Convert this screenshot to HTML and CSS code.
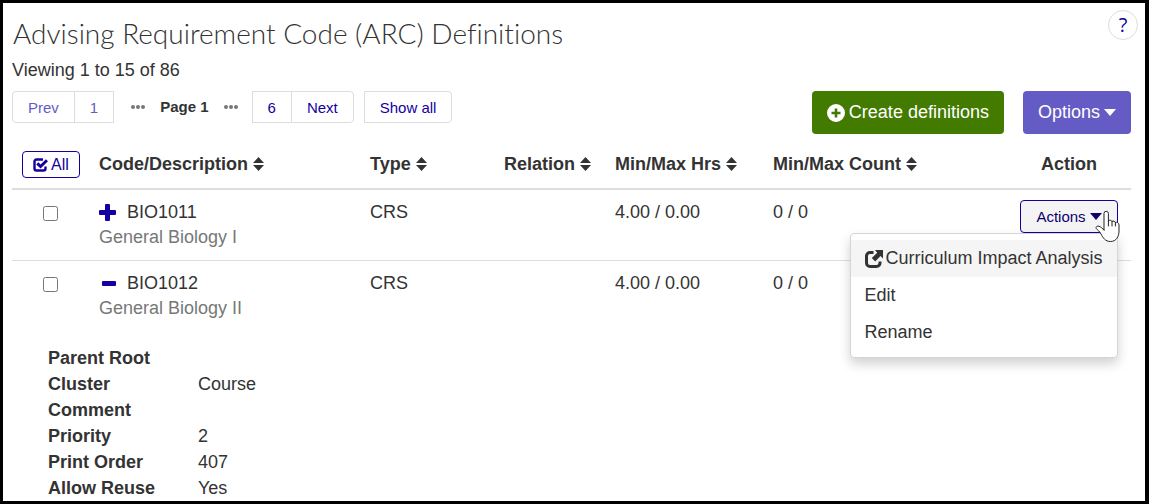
FILE: index.html
```
<!DOCTYPE html>
<html lang="en">
<head>
    <meta charset="UTF-8">
    <meta name="viewport" content="width=device-width, initial-scale=1.0">
    <title>Advising Requirement Code (ARC) Definitions</title>
    <link rel="stylesheet" href="styles.css">
</head>
<body>
    <!-- shared icons -->
    <svg class="sprite" aria-hidden="true">
        <symbol id="sort" viewBox="0 0 11 14">
            <path d="M5.5 0 11 6H0zM0 8h11l-5.5 6z"/>
        </symbol>
        <symbol id="caret" viewBox="0 0 12 7">
            <path d="M0 0h12L6 7z"/>
        </symbol>
        <symbol id="dots" viewBox="0 0 14 4">
            <circle cx="2" cy="2" r="2"/><circle cx="7" cy="2" r="2"/><circle cx="12" cy="2" r="2"/>
        </symbol>
    </svg>

    <div class="page">
        <header class="page-header">
            <h1>Advising Requirement Code (ARC) Definitions</h1>
            <button type="button" class="help" aria-label="Help">?</button>
        </header>

        <main class="content">
            <p class="viewing">Viewing 1 to 15 of 86</p>

            <div class="toolbar">
                <nav class="pagination" aria-label="Pages">
                    <div class="group">
                        <button type="button" disabled>Prev</button>
                        <button type="button" disabled>1</button>
                    </div>
                    <div class="current">
                        <svg width="14" height="4"><use href="#dots"/></svg>
                        <strong>Page 1</strong>
                        <svg width="14" height="4"><use href="#dots"/></svg>
                    </div>
                    <div class="group">
                        <button type="button">6</button>
                        <button type="button">Next</button>
                    </div>
                    <div class="group show-all">
                        <button type="button">Show all</button>
                    </div>
                </nav>
                <div class="buttons">
                    <button type="button" class="btn btn-create">
                        <svg width="18" height="18" viewBox="0 0 18 18"><path fill-rule="evenodd" d="M9 0a9 9 0 1 1 0 18A9 9 0 0 1 9 0zM7.7 4.5v3.2H4.5v2.6h3.2v3.2h2.6v-3.2h3.2V7.7h-3.2V4.5z"/></svg>
                        Create definitions
                    </button>
                    <button type="button" class="btn btn-options">
                        Options
                        <svg width="12" height="7"><use href="#caret"/></svg>
                    </button>
                </div>
            </div>

            <table class="definitions">
                <colgroup>
                    <col class="col-check">
                    <col class="col-code">
                    <col class="col-type">
                    <col class="col-relation">
                    <col class="col-hours">
                    <col class="col-count">
                    <col class="col-action">
                </colgroup>
                <thead>
                    <tr>
                        <th class="check">
                            <button type="button" class="select-all">
                                <svg width="15" height="14" viewBox="0 0 15 14"><path fill="none" stroke="currentColor" stroke-width="2.4" d="M10 1.5H3.5a2 2 0 0 0-2 2v7a2 2 0 0 0 2 2h7a2 2 0 0 0 2-2V8.5"/><path fill="none" stroke="currentColor" stroke-width="3" d="M4.3 5.3 7.6 8.5 14 2.2"/></svg>
                                All
                            </button>
                        </th>
                        <th>Code/Description <svg class="sort" width="11" height="14"><use href="#sort"/></svg></th>
                        <th>Type <svg class="sort" width="11" height="14"><use href="#sort"/></svg></th>
                        <th>Relation <svg class="sort" width="11" height="14"><use href="#sort"/></svg></th>
                        <th>Min/Max Hrs <svg class="sort" width="11" height="14"><use href="#sort"/></svg></th>
                        <th>Min/Max Count <svg class="sort" width="11" height="14"><use href="#sort"/></svg></th>
                        <th class="action">Action</th>
                    </tr>
                </thead>
                <tbody>
                    <tr>
                        <td class="check"><input type="checkbox" aria-label="Select BIO1011"></td>
                        <td>
                            <div class="code">
                                <button type="button" class="toggle" aria-label="Expand BIO1011">
                                    <svg width="17" height="17" viewBox="0 0 17 17"><path d="M7 0h3q1 0 1 1v5h5q1 0 1 1v3q0 1-1 1h-5v5q0 1-1 1H7q-1 0-1-1v-5H1q-1 0-1-1V7q0-1 1-1h5V1q0-1 1-1z"/></svg>
                                </button>
                                BIO1011
                            </div>
                            <div class="description">General Biology I</div>
                        </td>
                        <td>CRS</td>
                        <td></td>
                        <td>4.00 / 0.00</td>
                        <td>0 / 0</td>
                        <td class="action">
                            <div class="dropdown">
                                <button type="button" class="btn-actions" aria-expanded="true">
                                    Actions
                                    <svg width="12" height="7"><use href="#caret"/></svg>
                                </button>
                                <div class="menu">
                                    <a href="#" class="active">
                                        <svg width="18" height="18" viewBox="0 0 18 18"><path fill="none" stroke="currentColor" stroke-width="3" d="M8.5 2.5H5A3.5 3.5 0 0 0 1.5 6v7A3.5 3.5 0 0 0 5 16.5h6.5A3.5 3.5 0 0 0 15 13v-1.500"/><path d="M10 0h8v8.500l-2.500-2.400-5.300 5.300-3.400-3.300 5.400-5.400z"/></svg>
                                        Curriculum Impact Analysis
                                    </a>
                                    <a href="#">Edit</a>
                                    <a href="#">Rename</a>
                                </div>
                                <svg class="pointer" width="26" height="33" viewBox="0 0 26 33"><path d="M9 20V3.500a2.200 2.200 0 0 1 4.400 0V11c1-1.200 3-1 3.600.5 1.200-.9 3-.4 3.400 1 1.500-.6 3.600.3 3.600 2.500v6c0 5-2.500 10.500-8.500 10.500-5 0-7.500-3.500-9.500-7.500-1.300-2.600-3.500-4-4.700-5.500-1-1.300.9-3 2.700-2.300 2 .8 3.500 2.300 5 3.800zM13.400 11v5M17 11.500V16M20.400 12.500V16"/></svg>
                            </div>
                        </td>
                    </tr>
                    <tr>
                        <td class="check"><input type="checkbox" aria-label="Select BIO1012"></td>
                        <td>
                            <div class="code">
                                <button type="button" class="toggle" aria-label="Collapse BIO1012">
                                    <svg width="17" height="17" viewBox="0 0 17 17"><rect x="3" y="6" width="14" height="5" rx="1"/></svg>
                                </button>
                                BIO1012
                            </div>
                            <div class="description">General Biology II</div>
                        </td>
                        <td>CRS</td>
                        <td></td>
                        <td>4.00 / 0.00</td>
                        <td>0 / 0</td>
                        <td></td>
                    </tr>
                </tbody>
            </table>

            <dl class="details">
                <dt>Parent Root</dt><dd></dd>
                <dt>Cluster</dt><dd>Course</dd>
                <dt>Comment</dt><dd></dd>
                <dt>Priority</dt><dd>2</dd>
                <dt>Print Order</dt><dd>407</dd>
                <dt>Allow Reuse</dt><dd>Yes</dd>
            </dl>
        </main>
    </div>
</body>
</html>
```
FILE: styles.css
```
* {
    box-sizing: border-box;
}
body {
    margin: 0;
    font-family: "Liberation Sans", Arial, sans-serif;
    font-size: 18px;
    line-height: 25px;
    color: #333;
    background: #fff;
}
button {
    font-family: inherit;
    cursor: pointer;
}
svg {
    fill: currentColor;
    flex-shrink: 0;
}
.sprite {
    display: none;
}
.page {
    min-height: 100vh;
    border: 3px solid #000;
    border-right-width: 4px;
}
.page-header {
    display: flex;
    justify-content: space-between;
    align-items: flex-start;
    padding: 7px 7px 0 10px;
}
h1 {
    margin: 5px 0 0;
    font-family: Lato, sans-serif;
    font-size: 28px;
    font-weight: 300;
    font-variant-ligatures: none;
    line-height: 36px;
}
.help {
    width: 30px;
    height: 30px;
    padding: 0;
    border: 1px solid #ddd;
    border-radius: 50%;
    background: #fff;
    color: #1400a0;
    font-family: "Open Sans", sans-serif;
    font-size: 20px;
    line-height: 28px;
}
.content {
    padding: 7px 14px 0 9px;
}
.viewing {
    margin: 0;
}

/* pagination and main buttons */
.toolbar {
    display: flex;
    justify-content: space-between;
    align-items: flex-start;
    margin-top: 8px;
}
.pagination {
    display: flex;
    font-size: 15px;
}
.group {
    display: flex;
}
.group button {
    height: 32px;
    padding: 0 15px;
    border: 1px solid #ddd;
    background: #fff;
    color: #1400a0;
    font-size: 15px;
}
.group button + button {
    margin-left: -1px;
}
.group button:disabled {
    color: #655bc4;
}
.group:first-child button:first-child {
    border-radius: 4px 0 0 4px;
}
.group button:last-child:not(:disabled) {
    border-radius: 0 4px 4px 0;
}
.group.show-all {
    margin-left: 10px;
}
.group.show-all button {
    border-radius: 4px;
}
.current {
    display: flex;
    align-items: center;
    gap: 15px;
    padding: 0 14px 0 17px;
}
.current strong {
    line-height: 30px;
}
.current svg {
    color: #777;
}
.buttons {
    display: flex;
    gap: 19px;
}
.btn {
    display: flex;
    align-items: center;
    gap: 4px;
    height: 43px;
    padding: 0 15px;
    border: 0;
    border-radius: 4px;
    color: #fff;
    font-size: 18px;
}
.btn-create {
    background: #437a00;
}
.btn-options {
    background: #655bc4;
}

/* definitions table */
.definitions {
    width: 100%;
    table-layout: fixed;
    border-collapse: collapse;
    margin-top: 7px;
}
.col-check { width: 79px; }
.col-code { width: 271px; }
.col-type { width: 134px; }
.col-relation { width: 111px; }
.col-hours { width: 158px; }
.col-count { width: 242px; }
.col-action { width: 124px; }
th {
    height: 48px;
    padding: 0 8px;
    border-bottom: 2px solid #ddd;
    text-align: left;
    white-space: nowrap;
}
td {
    height: 71px;
    padding: 10px 8px 0;
    vertical-align: top;
}
tbody tr + tr td {
    border-top: 1px solid #ddd;
}
.check {
    padding-left: 10px;
}
td.check {
    padding: 16px 8px 0 30px;
    line-height: 0;
}
.check input {
    width: 15px;
    height: 15px;
    margin: 0 1px;
}
.action {
    text-align: center;
}
.sort {
    vertical-align: -1px;
}
.select-all {
    display: flex;
    align-items: center;
    gap: 3px;
    height: 27px;
    padding: 0 10px;
    border: 1px solid #1400a0;
    border-radius: 4px;
    background: #fff;
    color: #1400a0;
    font-size: 16px;
}
.code {
    display: flex;
    align-items: center;
    gap: 11px;
}
.toggle {
    display: flex;
    padding: 0;
    border: 0;
    background: none;
    color: #1400a0;
}
.description {
    color: #777;
}

/* actions menu */
.dropdown {
    position: relative;
    display: inline-block;
}
.btn-actions {
    display: flex;
    align-items: center;
    gap: 4px;
    height: 33px;
    padding: 0 15px;
    border: 1px solid #1400a0;
    border-radius: 4px;
    background: #f4f4f4;
    color: #0d006b;
    font-size: 15px;
}
.menu {
    position: absolute;
    top: 100%;
    right: 0;
    padding: 6px 0;
    border: 1px solid #d5d5d5;
    border-radius: 4px;
    background: #fff;
    box-shadow: 0 6px 12px rgba(0, 0, 0, 0.18);
    text-align: left;
    white-space: nowrap;
}
.menu a {
    display: flex;
    align-items: center;
    gap: 3px;
    height: 37px;
    padding: 0 14px;
    color: #333;
    text-decoration: none;
}
.menu a.active {
    background: #f5f5f5;
}
.pointer {
    position: absolute;
    top: 10px;
    right: -3px;
    fill: #fff;
    stroke: #222;
    stroke-width: 1px;
    stroke-linejoin: round;
    stroke-linecap: round;
}

/* expanded row */
.details {
    display: grid;
    grid-template-columns: 150px 1fr;
    grid-auto-rows: 26px;
    margin: 14px 0 0 36px;
    line-height: 26px;
}
.details dt {
    font-weight: bold;
}
.details dd {
    margin: 0;
}
```
